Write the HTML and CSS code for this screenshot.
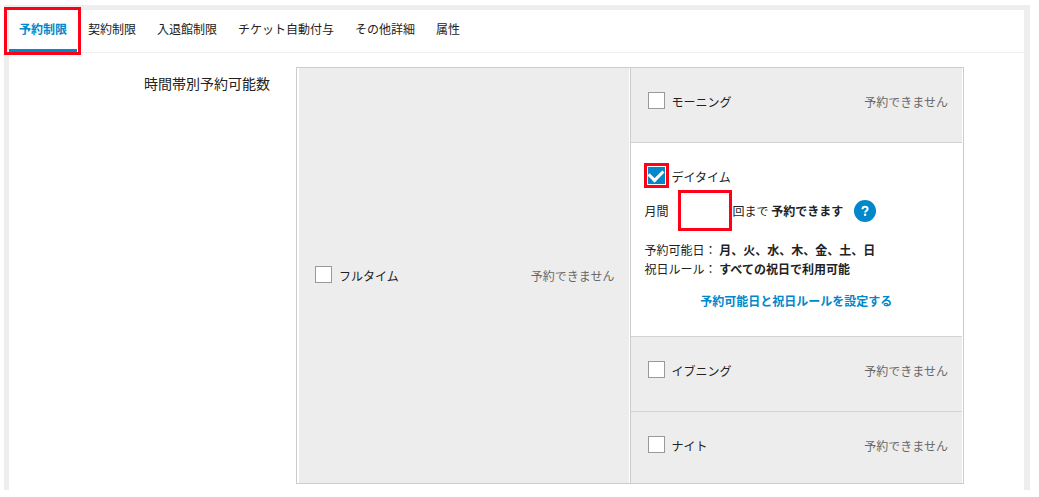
FILE: index.html
```html
<!DOCTYPE html>
<html lang="ja">
<head>
  <meta charset="UTF-8" />
  <meta name="viewport" content="width=device-width, initial-scale=1.0"/>
  <title>予約制限</title>
  <link rel="stylesheet" href="styles.css">
</head>
<body>
  <div class="panel">
    <nav class="tabs">
      <a href="#reserve" class="tab active">予約制限</a>
      <a href="#contract" class="tab">契約制限</a>
      <a href="#entry" class="tab">入退館制限</a>
      <a href="#ticket" class="tab">チケット自動付与</a>
      <a href="#other" class="tab">その他詳細</a>
      <a href="#attr" class="tab">属性</a>
    </nav>

    <form class="form-row">
      <div class="form-label" id="slotLabel">時間帯別予約可能数</div>

      <div class="slots" role="group" aria-labelledby="slotLabel">
        <div class="slot-full">
          <div class="slot-head">
            <input type="checkbox" id="full">
            <label for="full">フルタイム</label>
            <span class="status">予約できません</span>
          </div>
        </div>

        <div class="slot-list">
          <div class="slot">
            <div class="slot-head">
              <input type="checkbox" id="morning">
              <label for="morning">モーニング</label>
              <span class="status">予約できません</span>
            </div>
          </div>

          <div class="slot selected">
            <div class="slot-head">
              <input type="checkbox" id="day" class="marked" checked>
              <label for="day">デイタイム</label>
            </div>
            <div class="limit">
              <label for="dayLimit">月間</label>
              <input type="text" id="dayLimit" class="limit-input">
              <span>回まで <b>予約できます</b></span>
              <button type="button" class="help">
                <svg width="22" height="22" viewBox="0 0 22 22" role="img">
                  <circle cx="11" cy="11" r="11" fill="#0088cb"/>
                  <path d="M8.5 9.2C8.5 7.7 9.6 6.8 11 6.8s2.6.8 2.6 2.1c0 1.9-2.4 1.7-2.4 3.5" fill="none" stroke="#fff" stroke-width="2"/>
                  <circle cx="11.1" cy="14.7" r="1.3" fill="#fff"/>
                </svg>
              </button>
            </div>
            <div class="rules">
              <div>予約可能日： <b>月、火、水、木、金、土、日</b></div>
              <div>祝日ルール： <b>すべての祝日で利用可能</b></div>
            </div>
            <a href="#rules" class="rules-link">予約可能日と祝日ルールを設定する</a>
          </div>

          <div class="slot">
            <div class="slot-head">
              <input type="checkbox" id="evening">
              <label for="evening">イブニング</label>
              <span class="status">予約できません</span>
            </div>
          </div>

          <div class="slot">
            <div class="slot-head">
              <input type="checkbox" id="night">
              <label for="night">ナイト</label>
              <span class="status">予約できません</span>
            </div>
          </div>
        </div>
      </div>
    </form>
  </div>
</body>
</html>
```
FILE: styles.css
```css
* {
  box-sizing: border-box;
}

body {
  margin: 5px 9px 7px 4px;
  background-color: #fff;
  color: #222;
  font-family: 'Noto Sans CJK JP', sans-serif;
  font-size: 12px;
  line-height: 20px;
}

a {
  text-decoration: none;
}

.panel {
  border: 5px solid #eee;
  border-right-width: 6px;
  border-bottom: none;
}

/* Tabs */
.tabs {
  display: flex;
  gap: 1px;
  border-bottom: 1px solid #eee;
}

.tab {
  padding: 9px 10px 10px;
  border-bottom: 3px solid transparent;
  color: #222;
}

.tab.active {
  position: relative;
  border-bottom-color: #0088cb;
  color: #0088cb;
  font-weight: bold;
}

/* Red marker around the current tab */
.tab.active::after {
  content: '';
  position: absolute;
  inset: -3px -4px -6px -5px;
  border: 3px solid #ff0019;
}

/* Form */
.form-row {
  display: flex;
  gap: 26px;
  padding: 14px 60px 6px 0;
}

.form-label {
  flex: 0 0 261px;
  padding-top: 6px;
  text-align: right;
  font-size: 14px;
}

.slots {
  flex: 1;
  display: grid;
  grid-template-columns: calc(50% - 1px) 1fr;
  border: 1px solid #ccc;
  padding: 0 1px 0 2px;
}

.slot-full {
  display: flex;
  flex-direction: column;
  justify-content: center;
  margin-right: 1px;
  padding: 0 14px 0 16px;
  background-color: #ededed;
}

.slot-list {
  border-left: 1px solid #ccc;
}

.slot {
  padding: 24px 14px 30px 17px;
  border-bottom: 1px solid #d3d3d3;
  background-color: #ededed;
}

.slot:last-child {
  padding-bottom: 27px;
  border-bottom: none;
}

.slot.selected {
  padding-bottom: 25px;
  background-color: #fff;
}

.slot-head {
  display: flex;
  align-items: center;
  gap: 7px;
}

.status {
  margin-left: auto;
  color: #666;
}

input[type="checkbox"] {
  appearance: none;
  display: grid;
  place-items: center;
  width: 17px;
  height: 17px;
  margin: 0 0 3px;
  border: 1px solid #999;
  background-color: #fff;
}

input[type="checkbox"]:checked {
  border-color: #0088cb;
  background-color: #0088cb;
}

input[type="checkbox"]:checked::after {
  content: '';
  width: 11px;
  height: 7px;
  margin-bottom: 4px;
  border: solid #fff;
  border-width: 0 0 3px 3px;
  transform: rotate(-45deg);
}

.marked {
  outline: 3px solid #ff0019;
  outline-offset: 1px;
}

/* Monthly limit */
.limit {
  display: flex;
  align-items: center;
  margin: 3px 0 9px -3px;
}

.limit-input {
  width: 54px;
  height: 41px;
  margin: 0 1px 0 9px;
  padding: 0 8px;
  border: 3px solid #ff0019;
  background-color: #fff;
  font: inherit;
}

.help {
  display: flex;
  margin-left: 11px;
  padding: 0;
  border: none;
  background: none;
  cursor: pointer;
}

.rules {
  margin-left: -3px;
  line-height: 19px;
}

.rules-link {
  display: block;
  margin-top: 13px;
  margin-left: -3px;
  color: #0088cb;
  font-weight: bold;
  text-align: center;
}
```
